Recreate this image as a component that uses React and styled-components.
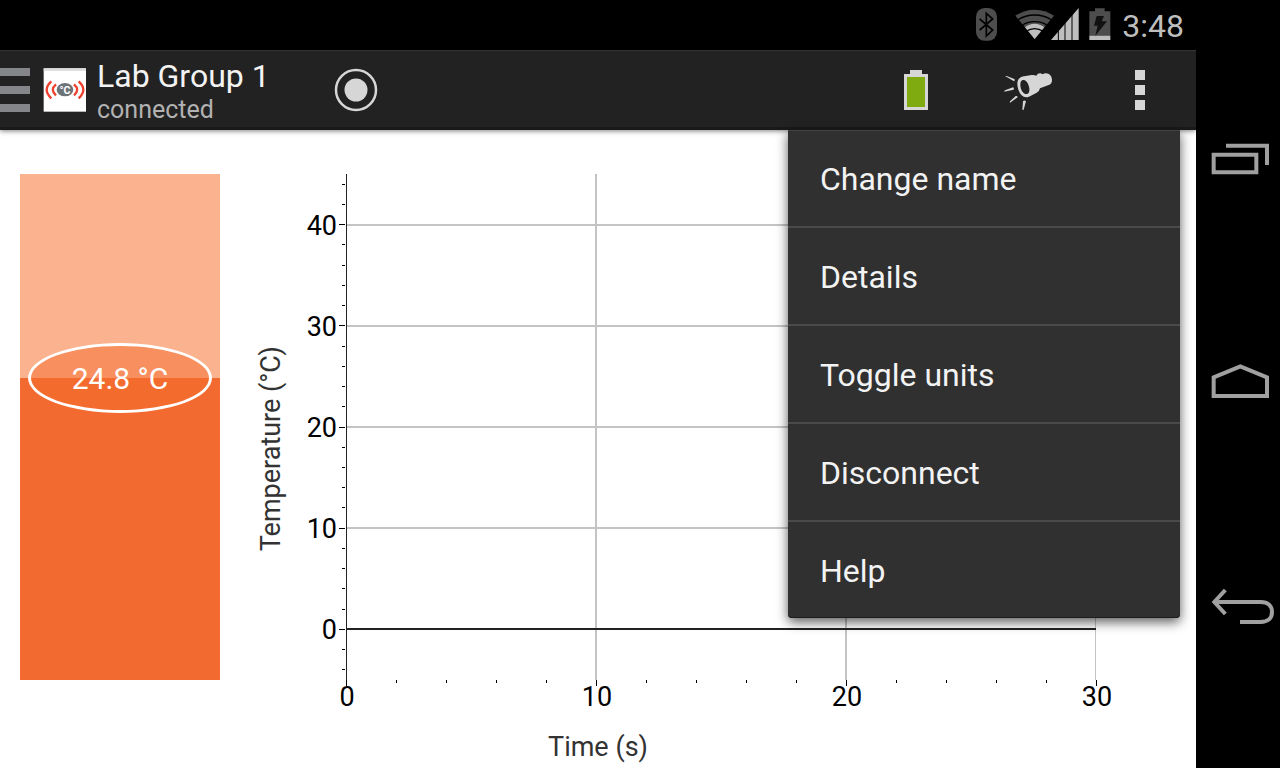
import { useState } from "react";
import styled, { createGlobalStyle } from "styled-components";

const GlobalStyle = createGlobalStyle`
  *, *::before, *::after {
    box-sizing: border-box;
  }
  body {
    margin: 0;
    background: #000;
    font-family: Roboto, "Noto Sans", sans-serif;
  }
  button {
    margin: 0;
    padding: 0;
    border: 0;
    background: none;
    color: inherit;
    font: inherit;
    cursor: pointer;
  }
  svg {
    display: block;
  }
`;

const Device = styled.div`
  display: flex;
  min-height: 100vh;
  background: #000;
`;

const Screen = styled.div`
  flex: 1;
  display: flex;
  flex-direction: column;
`;

const StatusBar = styled.div`
  display: flex;
  justify-content: flex-end;
  gap: 10px;
  height: 50px;
  padding-right: 12px;
  color: #bebebe;
`;

const StatusIcons = styled.div`
  display: flex;
  padding-top: 7px;
`;

const Gap = styled.span`
  width: ${({ $small }) => ($small ? "9px" : "16px")};
`;

const Clock = styled.time`
  font-size: 32px;
  line-height: 52px;
`;

const ActionBar = styled.header`
  position: relative;
  z-index: 1;
  display: flex;
  height: 80px;
  padding-top: 2px;
  background: #222;
  border-top: 1px solid #333;
  border-bottom: 3px solid #1a1a1a;
  box-shadow: 0 1px 5px rgba(0, 0, 0, 0.5);
`;

const HomeButton = styled.button`
  display: flex;
  align-items: center;
  width: 300px;
  text-align: left;
`;

const DrawerMark = styled.span`
  margin-right: 12px;
`;

const Titles = styled.span`
  display: flex;
  flex-direction: column;
  margin-left: 10px;
  padding-top: 2px;
`;

const Title = styled.span`
  color: #f3f3f3;
  font-size: 32px;
  line-height: 38px;
`;

const Subtitle = styled.span`
  color: #b2b2b2;
  font-size: 25px;
  line-height: 30px;
`;

const ActionButton = styled.button`
  display: flex;
  align-items: center;
  justify-content: center;
  width: 112px;
`;

const Spacer = styled.div`
  flex: 1;
`;

const Menu = styled.ul`
  position: absolute;
  top: calc(100% + 3px);
  right: 16px;
  width: 392px;
  margin: 0;
  padding: 0;
  list-style: none;
  background: #303030;
  border-radius: 0 0 4px 4px;
  box-shadow: 0 4px 12px rgba(0, 0, 0, 0.65), inset 0 1px 0 #444, inset 0 -1px 0 #1c1c1c;
`;

const MenuRow = styled.li`
  & + & {
    border-top: 2px solid #4a4a4a;
  }
`;

const MenuButton = styled.button`
  display: block;
  width: 100%;
  height: 96px;
  padding: 2px 32px 0;
  color: #f3f3f3;
  font-size: 32px;
  text-align: left;
`;

const Main = styled.main`
  flex: 1;
  display: grid;
  grid-template-columns: 20px 200px 102px 24px 1fr 100px;
  grid-template-rows: 44px 1fr 88px;
  background: #fff;
`;

const Gauge = styled.div`
  grid-area: 2 / 2;
  position: relative;
  display: flex;
  flex-direction: column;
  justify-content: flex-end;
  background: #fbb28e;
`;

const Level = styled.div`
  background: #f26a2f;
`;

const Reading = styled.output`
  position: absolute;
  left: 8px;
  right: 8px;
  display: flex;
  align-items: center;
  justify-content: center;
  height: 70px;
  border: 3px solid #fff;
  border-radius: 50%;
  background: rgba(246, 108, 46, 0.5);
  color: #fff;
  font-size: 30px;
  transform: translateY(50%);
`;

const YTitle = styled.div`
  grid-area: 1 / 3 / 4 / 4;
  display: flex;
  align-items: center;
  justify-content: center;

  span {
    color: #333;
    font-size: 27px;
    line-height: 32px;
    writing-mode: vertical-rl;
    transform: rotate(180deg);
  }
`;

const XTitle = styled.div`
  grid-area: 3 / 1 / 4 / 7;
  padding-top: 51px;
  color: #333;
  font-size: 27px;
  line-height: 32px;
  text-align: center;
`;

const Plot = styled.svg`
  grid-area: 2 / 5;
  width: 100%;
  height: 100%;
  overflow: visible;

  line {
    stroke: #000;
    shape-rendering: crispEdges;
  }
  line.grid {
    stroke: #c4c4c4;
    stroke-width: 2;
  }
  line.axis {
    stroke: #222;
  }
  text {
    fill: #000;
    font-size: 27px;
  }
`;

const NavBar = styled.nav`
  display: flex;
  flex-direction: column;
  width: 84px;
  padding: 48px 0;
`;

const NavButton = styled.button`
  flex: 1;
  display: flex;
  align-items: center;
  justify-content: center;
`;

const BluetoothIcon = () => (
  <svg width="24" height="34" viewBox="45 21 72 102">
    <rect x="48" y="24" width="63" height="98" rx="26" fill="#4d4d4d" />
    <path d="M59 57 98 90 79 108V40L98 57 59 90" fill="none" stroke="#000" strokeWidth="5" />
  </svg>
);

const WifiIcon = () => (
  <svg width="36" height="34" viewBox="162 21 108 102" overflow="visible">
    <path d="M221 117 163 47Q190 29 221 29T279 47Z" fill="#4d4d4d" />
    <path d="M221 117 192 82Q205 71 221 71T250 82Z" fill="#bebebe" />
    <g fill="none" stroke="#000" strokeWidth="4">
      <path d="M170 60Q193 45 221 45T272 60" />
      <path d="M182 77Q198 65 221 65T260 77" />
      <path d="M196 94Q207 86 221 86T246 94" />
    </g>
  </svg>
);

const SignalIcon = () => (
  <svg width="28" height="34" viewBox="271 21 84 102">
    <path d="M271 120 354 24V120Z" fill="#bebebe" />
    <path d="M293 90V121M313 66V121M334 40V121" stroke="#000" strokeWidth="3" />
  </svg>
);

const ChargingIcon = () => (
  <svg width="24" height="34" viewBox="383 21 72 102">
    <path d="M387 34H404V25H433V34H450V107H387Z" fill="#4d4d4d" />
    <path d="M387 107H450V120H387Z" fill="#bebebe" />
    <path d="M409 48H431L424 64H440L405 107L412 77H401Z" fill="#111" />
  </svg>
);

const DrawerIcon = () => (
  <svg width="31" height="46" viewBox="0 0 31 46" fill="#85868a">
    <path d="M0 1h30v8H0zM0 19h30v8H0zM0 37h30v8H0z" />
  </svg>
);

const LogoIcon = () => (
  <svg width="44" height="44" viewBox="129 72 132 132">
    <rect x="131" y="73" width="127" height="130" fill="#fff" />
    <rect x="131" y="73" width="127" height="8" fill="#dedede" />
    <ellipse cx="195" cy="137" rx="25" ry="20" fill="#6d7478" />
    <text
      x="195"
      y="149"
      textAnchor="middle"
      fontSize="32"
      fontWeight="700"
      fill="#fff"
    >
      °C
    </text>
    <g fill="none" stroke="#ee3e2c" strokeWidth="7">
      <path d="M154 112Q126 137 154 163" />
      <path d="M168 121Q149 137 168 154" />
      <path d="M236 112Q264 137 236 163" />
      <path d="M222 121Q241 137 222 154" />
    </g>
  </svg>
);

const RecordIcon = () => (
  <svg width="44" height="44" viewBox="0 0 44 44">
    <circle cx="22" cy="22" r="20" fill="none" stroke="#d6d6d6" strokeWidth="2.5" />
    <circle cx="22" cy="22" r="11.5" fill="#d6d6d6" />
  </svg>
);

const BatteryIcon = () => (
  <svg width="24" height="40" viewBox="0 0 24 40">
    <path d="M0 4h6V0h12v4h6v36H0z" fill="#d6d6d6" />
    <path d="M3 7h18v30H3z" fill="#7fab10" />
  </svg>
);

const TorchIcon = () => (
  <svg width="52" height="44" viewBox="366 48 156 132" fill="#d6d6d6">
    <path
      fillRule="evenodd"
      d="M412 96C412 82 420 75 432 73L455 69Q463 68 469 71Q473 63 482 64L487 67Q496 62 505 65Q515 69 516 84Q516 95 508 98L480 109Q478 119 470 122L447 134Q434 139 424 129Q413 116 412 96ZM421 98C421 112 429 126 439 126C447 126 450 117 447 104C444 91 437 84 430 84C424 84 421 90 421 98Z"
    />
    <path d="M375 72 380 72 403 81Q406 84 402 88ZM372 119 375 115 399 106Q403 108 401 113ZM389 153 390 148 407 132Q413 131 413 136ZM427 174 429 148Q432 143 438 147L431 173Z" />
  </svg>
);

const OverflowIcon = () => (
  <svg width="10" height="40" viewBox="0 0 10 40" fill="#d6d6d6">
    <path d="M0 0h10v10H0zM0 15h10v10H0zM0 30h10v10H0z" />
  </svg>
);

const NAV_ITEMS = [
  {
    label: "Recent apps",
    viewBox: "30 30 228 120",
    d: "M71 74H199V127H71ZM108 47H231V105",
  },
  {
    label: "Home",
    viewBox: "30 42 228 120",
    d: "M71 138V82L151 49L231 82V138Z",
  },
  {
    label: "Back",
    viewBox: "30 39 228 120",
    d: "M75 81H212C234 81 246 93 246 111C246 130 234 141 212 141H150M106 45 73 81 106 117",
  },
];

const MENU_ITEMS = ["Change name", "Details", "Toggle units", "Disconnect", "Help"];

const Y_MIN = -5;
const Y_MAX = 45;
const X_MAX = 30;

const yPos = (value) => `${((Y_MAX - value) / (Y_MAX - Y_MIN)) * 100}%`;
const xPos = (value) => `${(value / X_MAX) * 100}%`;

const Y_TICKS = Array.from({ length: 25 }, (_, i) => i * 2 - 4);
const X_TICKS = Array.from({ length: 16 }, (_, i) => i * 2);

const TemperaturePlot = () => (
  <Plot role="img" aria-label="Temperature over time">
    {/* nested svg clips the last grid line at the plot edge */}
    <svg width="100%" height="100%">
      {[10, 20, 30, 40].map((v) => (
        <line key={v} className="grid" x1="0" x2="100%" y1={yPos(v)} y2={yPos(v)} />
      ))}
      {[10, 20, 30].map((v) => (
        <line key={v} className="grid" x1={xPos(v)} x2={xPos(v)} y1="0" y2="100%" />
      ))}
    </svg>
    <line className="axis" x1="0" x2="100%" y1={yPos(0)} y2={yPos(0)} strokeWidth="2" />
    <line className="axis" x1="0" x2="0" y1="0" y2="100%" />
    {Y_TICKS.map((v) => (
      <line key={v} x1={v % 10 === 0 ? -7 : -4} x2="-1" y1={yPos(v)} y2={yPos(v)} />
    ))}
    <g transform="translate(0 10)">
      {[0, 10, 20, 30, 40].map((v) => (
        <text key={v} x="-9" y={yPos(v)} textAnchor="end">
          {v}
        </text>
      ))}
    </g>
    {X_TICKS.map((v) => (
      <svg key={v} x={xPos(v)} y="100%" overflow="visible">
        <line x1="0" x2="0" y1="0" y2={v % 10 === 0 ? 6 : 3} />
        {v % 10 === 0 && (
          <text x="1" y="26" textAnchor="middle">
            {v}
          </text>
        )}
      </svg>
    ))}
  </Plot>
);

const App = () => {
  const [menuOpen, setMenuOpen] = useState(true);
  const temperature = 24.8;
  const level = `${((temperature - Y_MIN) / (Y_MAX - Y_MIN)) * 100}%`;

  return (
    <>
      <GlobalStyle />
      <Device>
        <Screen>
          <StatusBar>
            <StatusIcons>
              <BluetoothIcon />
              <Gap />
              <WifiIcon />
              <SignalIcon />
              <Gap $small />
              <ChargingIcon />
            </StatusIcons>
            <Clock>3:48</Clock>
          </StatusBar>
          <ActionBar>
            <HomeButton type="button">
              <DrawerMark>
                <DrawerIcon />
              </DrawerMark>
              <LogoIcon />
              <Titles>
                <Title>Lab Group 1</Title>
                <Subtitle>connected</Subtitle>
              </Titles>
            </HomeButton>
            <ActionButton type="button" aria-label="Record">
              <RecordIcon />
            </ActionButton>
            <Spacer />
            <ActionButton type="button" aria-label="Battery">
              <BatteryIcon />
            </ActionButton>
            <ActionButton type="button" aria-label="Identify sensor">
              <TorchIcon />
            </ActionButton>
            <ActionButton
              type="button"
              aria-label="More options"
              aria-expanded={menuOpen}
              onClick={() => setMenuOpen(!menuOpen)}
            >
              <OverflowIcon />
            </ActionButton>
            {menuOpen && (
              <Menu>
                {MENU_ITEMS.map((item) => (
                  <MenuRow key={item}>
                    <MenuButton type="button" onClick={() => setMenuOpen(false)}>
                      {item}
                    </MenuButton>
                  </MenuRow>
                ))}
              </Menu>
            )}
          </ActionBar>
          <Main>
            <Gauge>
              <Level style={{ height: level }} />
              <Reading style={{ bottom: level }}>{temperature} °C</Reading>
            </Gauge>
            <YTitle>
              <span>Temperature (°C)</span>
            </YTitle>
            <TemperaturePlot />
            <XTitle>Time (s)</XTitle>
          </Main>
        </Screen>
        <NavBar>
          {NAV_ITEMS.map(({ label, viewBox, d }) => (
            <NavButton key={label} type="button" aria-label={label}>
              <svg
                width="76"
                height="40"
                viewBox={viewBox}
                fill="none"
                stroke="#a0a0a0"
                strokeWidth="12"
              >
                <path d={d} />
              </svg>
            </NavButton>
          ))}
        </NavBar>
      </Device>
    </>
  );
};

export default App;
